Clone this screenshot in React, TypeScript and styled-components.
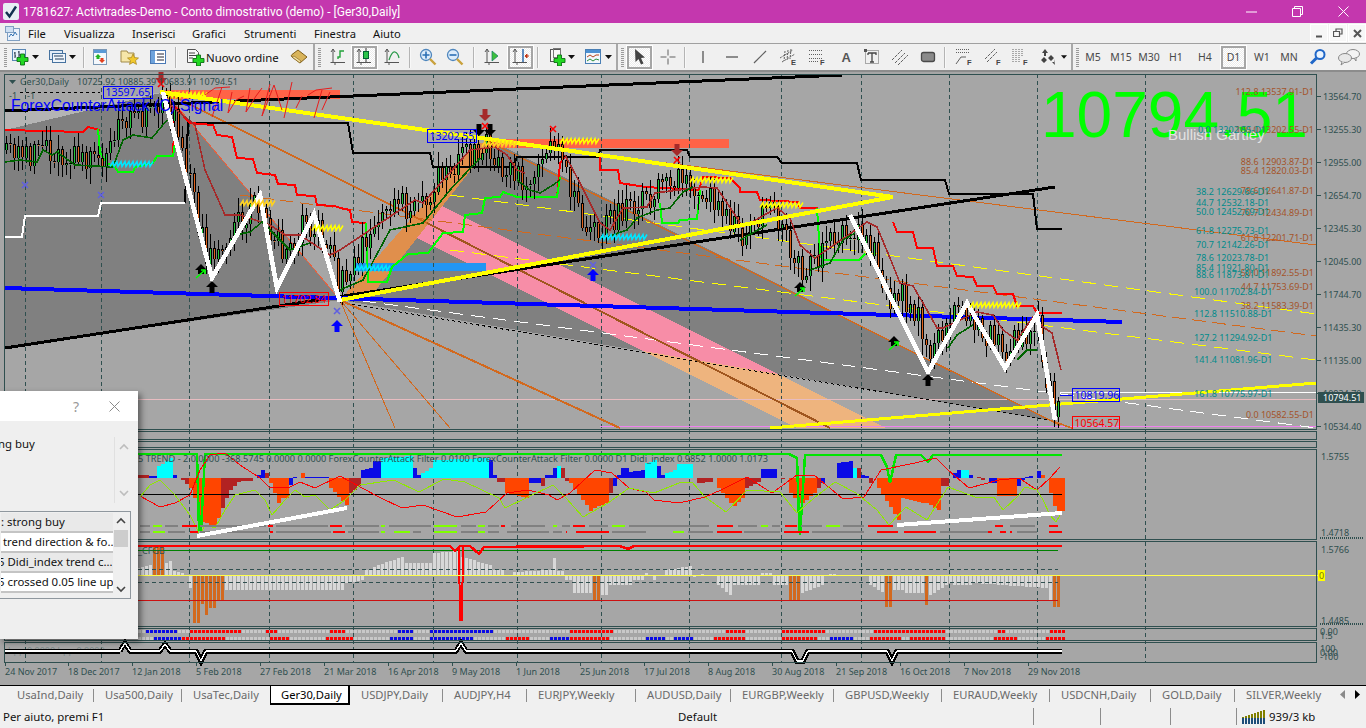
import React from "react";
import styled, { createGlobalStyle } from "styled-components";

const UI = `"Noto Sans", "Open Sans", "DejaVu Sans", sans-serif`;
const ARIAL = `"Liberation Sans", Arial, sans-serif`;
const SLATE = "#2f4f4f";

const Global = createGlobalStyle`
  html, body { margin: 0; padding: 0; height: 100%; overflow: hidden; background: #f0f0f0; }
  #root { height: 100%; }
`;

const Page = styled.div`
  width: 1366px; height: 728px; display: grid;
  grid-template-rows: 23px 20px 27px 615px 20px 23px;
  font-family: ${UI}; overflow: hidden;
`;
const TitleBar = styled.div`
  background: #c437ae; display: flex; align-items: center; color: #fff;
`;
const AppBadge = styled.div`
  width: 16px; height: 17px; margin: 0 4px 0 3px; background: #e8eef4; border-radius: 2px;
  display: flex; align-items: center; justify-content: center;
`;
const TitleText = styled.div`
  flex: 1; font-family: Roboto, ${UI}; font-size: 12px; white-space: nowrap; color: #fff;
`;
const WinBtn = styled.div`
  width: 46px; height: 23px; display: flex; align-items: center; justify-content: center;
`;
const MenuBar = styled.div`
  background: #f0f0f0; display: flex; align-items: center; font-size: 11.2px; color: #111;
`;
const MenuIcon = styled.div`
  width: 28px; padding-left: 5px; box-sizing: border-box; display: flex; align-items: center;
`;
const MenuItem = styled.div<{ $w: number }>`
  width: ${(p) => p.$w}px; white-space: nowrap;
`;
const MdiGroup = styled.div`
  margin-left: auto; display: flex; gap: 1px; padding-right: 0;
`;
const MdiBtn = styled.div`
  width: 18px; height: 18px; background: #f7f7f7; border: 1px solid #fff; box-sizing: border-box;
  display: flex; align-items: center; justify-content: center;
`;
const Toolbar = styled.div`
  background: #f0f0f0; border-top: 1px solid #a0a0a0; box-sizing: border-box;
  display: flex; align-items: center; padding-left: 2px; font-size: 11.2px; color: #111;
`;
const Grip = styled.div`
  width: 3px; height: 19px; margin: 0 1px 0 2px;
  background: repeating-linear-gradient(to bottom, #9a9a9a 0 1px, transparent 1px 2px);
`;
const Gap = styled.div<{ $w: number }>`
  width: ${(p) => p.$w}px; flex: none;
`;
const Sep = styled.div<{ $strong?: boolean }>`
  width: 2px; flex: none; height: ${(p) => (p.$strong ? 26 : 21)}px;
  background: ${(p) => (p.$strong ? "#a8a8a8" : "#b4b4b4")};
  ${(p) => (p.$strong ? "" : "border-right: 1px solid #f8f8f8; box-sizing: border-box;")}
`;
const Slot = styled.div<{ $w: number; $active?: boolean }>`
  width: ${(p) => p.$w}px; height: 23px; flex: none; box-sizing: border-box;
  display: flex; align-items: center; justify-content: center;
  ${(p) =>
    p.$active
      ? `border: 2px solid #a6a6a6; box-shadow: 0 0 0 1px #fff;
         background: repeating-conic-gradient(#ffffff 0 25%, #ececec 0 50%) 0 0 / 2px 2px;`
      : ""}
`;
const OrderLabel = styled.div`
  width: 77px; flex: none; font-size: 11.4px; white-space: nowrap; color: #111; box-sizing: border-box;
`;
const Period = styled(Slot)`
  font-size: 10.5px; color: #4a4a4a;
`;
const ChartArea = styled.div`
  position: relative; background: #a6a6a6; border-top: 2px solid #8c8c8c; box-sizing: border-box; overflow: hidden;
`;
const ChartSvg = styled.svg`
  position: absolute; left: 0; top: -2px; width: 1366px; height: 615px; display: block;
`;
const AxisText = styled.text<{ $c?: string; $s?: number }>`
  font-family: ${UI}; font-size: ${(p) => p.$s ?? 9}px; fill: ${(p) => p.$c ?? SLATE};
`;
const FibText = styled.text<{ $c: string }>`
  font-family: ${UI}; font-size: 9px; fill: ${(p) => p.$c};
`;
const BigPrice = styled.text`
  font-family: ${ARIAL}; font-size: 64px; fill: #00ff00;
`;
const PatternText = styled.text`
  font-family: ${ARIAL}; font-size: 15px; fill: #e2e2e2;
`;
const SignalText = styled.text`
  font-family: ${ARIAL}; font-size: 15.6px; fill: #0000ff;
`;
const BoxText = styled.text<{ $c: string }>`
  font-family: ${UI}; font-size: 10.5px; fill: ${(p) => p.$c};
`;

/* dialog */
const Dialog = styled.div`
  position: absolute; left: 0; top: 319px; width: 138px; height: 248px; background: #efefef;
  box-shadow: 3px 3px 6px rgba(0,0,0,.45); font-size: 11.4px; color: #111;
`;
const DialogHead = styled.div`
  height: 30px; background: #fff; display: flex; align-items: center; justify-content: flex-end; gap: 30px; padding-right: 18px;
`;
const HelpMark = styled.span`
  font-size: 14px; color: #999;
`;
const DialogBody = styled.div`
  height: 66px; margin-top: 16px; display: flex; justify-content: space-between;
`;
const BodyText = styled.div`
  line-height: 14px; margin-top: 0; margin-left: -2px; white-space: nowrap;
`;
const BodyScroll = styled.div`
  width: 19px; margin-right: 5px; border-left: 1px solid #e0e0e0; display: flex; flex-direction: column; justify-content: space-between; align-items: center; padding: 6px 0;
  box-sizing: border-box;
`;
const ListBox = styled.div`
  position: absolute; left: -1px; top: 120px; width: 132px; height: 88px; background: #efefef;
  border: 1px solid #8f979e; box-sizing: border-box; display: flex; padding: 1px 2px 1px 1px;
`;
const ListRows = styled.div`
  width: 112px; overflow: hidden;
`;
const ListRow = styled.div<{ $white?: boolean; $x: number }>`
  height: 20px; line-height: 18px; box-sizing: border-box; background: ${(p) => (p.$white ? "#fff" : "#e9e9e9")};
  border-bottom: 2px solid #c4c4c4; white-space: nowrap; overflow: hidden; padding-left: ${(p) => Math.max(0, p.$x)}px;
  text-indent: ${(p) => Math.min(0, p.$x)}px;
`;
const ListScroll = styled.div`
  flex: 1; display: flex; flex-direction: column; align-items: center; justify-content: space-between; padding: 4px 0;
  position: relative;
`;
const ScrollThumb = styled.div`
  position: absolute; left: 1px; right: 0; top: 17px; height: 17px; background: #cdcdcd;
`;

/* tabs + status */
const TabBar = styled.div`
  background: #f0f0f0; border-top: 1px solid #000; box-sizing: border-box; display: flex; padding-left: 6px; position: relative; font-size: 11.2px;
`;
const Tab = styled.div<{ $w: number; $active?: boolean; $last?: boolean }>`
  width: ${(p) => p.$w}px; box-sizing: border-box; padding-left: 11px; white-space: nowrap; line-height: 18px;
  color: ${(p) => (p.$active ? "#000" : "#6a6a6a")};
  ${(p) =>
    p.$active
      ? "background:#fff; border:1px solid #000; border-top:none; border-right-width:2px; border-bottom-width:2px; padding-left:10px; height:19px;"
      : p.$last
      ? ""
      : "position:relative;"}
  ${(p) =>
    !p.$active && !p.$last
      ? `&::after{content:""; position:absolute; right:0; top:3px; height:13px; width:1px; background:#8c8c8c;}`
      : ""}
`;
const TabArrows = styled.div`
  position: absolute; right: 6px; top: 4px; display: flex; gap: 10px; align-items: center;
  background: #f0f0f0; padding-left: 6px;
`;
const StatusBar = styled.div`
  background: #f0f0f0; display: flex; align-items: center; font-size: 11.4px; color: #111;
`;
const StatusCell = styled.div<{ $w: number; $line?: boolean }>`
  width: ${(p) => p.$w}px; height: 17px; line-height: 17px; box-sizing: border-box; flex: none; white-space: nowrap;
  display: flex; align-items: center; gap: 4px;
  ${(p) => (p.$line ? "border-left: 1px solid #8c8c8c; padding-left: 5px;" : "padding-left: 3px;")}
`;

/* ---------- toolbar icons ---------- */
const Svg = ({ w = 18, h = 18, children }: { w?: number; h?: number; children: React.ReactNode }) => (
  <svg width={w} height={h} viewBox={`0 0 ${w} ${h}`}>{children}</svg>
);
const Plus = ({ x, y, s = 1 }: { x: number; y: number; s?: number }) => (
  <path transform={`translate(${x} ${y}) scale(${s})`} d="M3.5 0h4v3.5H11v4H7.5V11h-4V7.5H0v-4h3.5z" fill="#22d822" stroke="#0b6e14" strokeWidth=".9" />
);
const DropArrow = () => (
  <Svg w={7} h={4}><path d="M0 0h7L3.5 4z" fill="#111" /></Svg>
);
const NewChart = () => (
  <Svg>
    <rect x="1.5" y="1.5" width="13" height="11" fill="#eaf2fb" stroke="#5a87b5" />
    <path d="M4 4v6M3 5h1M4 8h1M8 3v6M7 4h1M8 7h1" stroke="#234" fill="none" />
    <Plus x={6} y={6} />
  </Svg>
);
const Profiles = () => (
  <Svg>
    <rect x="1.5" y="2.5" width="13" height="9" fill="#dfeaf6" stroke="#46729f" />
    <rect x="4.5" y="5.5" width="13" height="9" fill="#eef4fb" stroke="#46729f" />
    <path d="M6 8h9M7 11h9" stroke="#1f3a5a" />
  </Svg>
);
const MarketWatch = () => (
  <Svg w={16}>
    <rect x="1.5" y="1.5" width="13" height="15" fill="#f4f8fc" stroke="#7a97b5" />
    <path d="M2 2h12v3H2z" fill="#5a9ad6" />
    <path d="M6 6l3 3H7.5v2h-3V9H3z" fill="#22b322" />
    <path d="M10 15l-3-3h1.5v-2h3v2H13z" fill="#e2401e" />
  </Svg>
);
const FolderStar = () => (
  <Svg w={20}>
    <path d="M1 3h6l1 2h6v9H1z" fill="#f6e6a8" stroke="#a08a4a" />
    <path d="M13 6l1.6 3.6 3.9.4-3 2.6 1 3.8-3.5-2-3.5 2 1-3.8-3-2.6 3.9-.4z" fill="#f2c92e" stroke="#a2801c" strokeWidth=".7" />
  </Svg>
);
const Navigator = () => (
  <Svg>
    <rect x="1.5" y="2.5" width="15" height="13" fill="#fff" stroke="#4a79b5" />
    <path d="M2 3h4v12H2z" fill="#6ea3dc" />
    <path d="M8 6h7M8 9h7M8 12h7" stroke="#223" />
  </Svg>
);
const NewOrder = () => (
  <Svg w={20}>
    <path d="M2.5 1.5h8l3 3v10h-11z" fill="#f9f9f9" stroke="#555" />
    <path d="M4 5h6M4 7.5h7M4 10h4" stroke="#444" />
    <Plus x={8} y={7} />
  </Svg>
);
const Expert = () => (
  <Svg>
    <path d="M8 2l9 7-7 6-8-6q-1.5-1.2 0-2.5z" fill="#d9b45a" stroke="#7f5e1a" />
    <path d="M2 9l8 6 1-2-7-5z" fill="#f3e0a2" stroke="#7f5e1a" strokeWidth=".6" />
  </Svg>
);
const axes = "M3 1v14M0.5 14.5H15M5 15v2M1 4l2-3 2 3";
const ChartBar = () => (
  <Svg>
    <path d={axes} fill="none" stroke="#555" />
    <path d="M8 11v-2h2V3h2M12 3h2" fill="none" stroke="#22a33a" strokeWidth="1.4" />
  </Svg>
);
const ChartCandle = () => (
  <Svg>
    <path d={axes} fill="none" stroke="#555" />
    <path d="M10 0v14" stroke="#333" />
    <rect x="7.5" y="3.5" width="5" height="7" fill="#2bc44a" stroke="#063" />
  </Svg>
);
const ChartLine = () => (
  <Svg>
    <path d={axes} fill="none" stroke="#555" />
    <path d="M5 12q3-9 6-8t4 6" fill="none" stroke="#2a9a4a" strokeWidth="1.3" />
  </Svg>
);
const ZoomIcon = ({ minus }: { minus?: boolean }) => (
  <Svg>
    <circle cx="7" cy="7" r="5.5" fill="#dcecfb" stroke="#4f86bd" strokeWidth="1.3" />
    <path d="M11 11l5.5 5.5" stroke="#c9a13c" strokeWidth="2.4" />
    <path d={minus ? "M3.5 7h7" : "M3.5 7h7M7 3.5v7"} stroke="#2a6fb5" strokeWidth="1.6" />
  </Svg>
);
const AutoScroll = () => (
  <Svg>
    <path d={axes} fill="none" stroke="#555" />
    <path d="M8 3l6 5-6 5z" fill="#3cc03c" stroke="#176" strokeWidth=".7" />
  </Svg>
);
const ChartShift = () => (
  <Svg>
    <path d={axes} fill="none" stroke="#555" />
    <path d="M11 1v13" stroke="#1f5fa8" strokeWidth="1.4" />
    <path d="M13 8h4M13 8l2-2v4z" fill="#c23a1a" stroke="#c23a1a" />
  </Svg>
);
const Indicators = () => (
  <Svg>
    <rect x="2.5" y="1.5" width="10" height="12" fill="#f7f7f7" stroke="#555" />
    <rect x="5.5" y="0.5" width="7" height="9" fill="none" stroke="#777" />
    <Plus x={6} y={7} />
  </Svg>
);
const Templates = () => (
  <Svg>
    <rect x="1.5" y="1.5" width="15" height="14" fill="#f2f7fc" stroke="#4a7fb5" />
    <path d="M2 2h14v3H2z" fill="#4d90d2" />
    <path d="M3 9l3-2 3 2 3-2 3 0" stroke="#b5421e" fill="none" />
    <path d="M3 13l3-2 3 2 3-2 3 1" stroke="#2a8f3a" fill="none" />
  </Svg>
);
const Cursor = () => (
  <Svg w={14}>
    <path d="M2 1l10 8.5-4 .5 2.5 5.5-2.5 1-2.5-5.5-3 3z" fill="#444" />
  </Svg>
);
const g = "#606060";
const Cross = () => (<Svg><path d="M9 1.5v6M9 10.5v6M1.5 9h6M10.5 9h6" stroke={g} /></Svg>);
const VLine = () => (<Svg><path d="M9 3v12" stroke={g} strokeWidth="1.4" /></Svg>);
const HLine = () => (<Svg><path d="M3 9h12" stroke={g} strokeWidth="1.4" /></Svg>);
const TLine = () => (<Svg><path d="M3 15L15 3" stroke={g} strokeWidth="1.2" /></Svg>);
const Badge = ({ t, x = 12 }: { t: string; x?: number }) => (
  <text x={x} y="17" fontFamily={ARIAL} fontSize="7.5" fontWeight="bold" fill="#444">{t}</text>
);
const ChanE = () => (
  <Svg><path d="M1 10L14 2M3 14L16 6M6 3l-1 10M9 2l-1 10M12 1l-1 10" stroke={g} fill="none" strokeDasharray="2 1" /><Badge t="E" /></Svg>
);
const FiboH = () => (
  <Svg>
    <path d="M1 2.5h14M1 6.5h14M1 10.5h14M1 13.5h9" stroke={g} strokeDasharray="1 1" />
    <Badge t="F" />
  </Svg>
);
const LetterA = () => (<Svg w={12}><text x="0.5" y="14" fontFamily={ARIAL} fontSize="13" fontWeight="bold" fill="#555">A</text></Svg>);
const TextBox = () => (
  <Svg>
    <rect x="2.5" y="2.5" width="13" height="13" fill="none" stroke={g} strokeDasharray="1 1" />
    <rect x="1" y="1" width="3" height="3" fill="#555" />
    <path d="M5 5h8v2M9 5v9M7 14h4M5 5v2" stroke="#444" fill="none" strokeWidth="1.3" />
  </Svg>
);
const Equi = () => (<Svg><path d="M1 12L11 2M4 15L14 5M7 17L17 7" stroke={g} strokeDasharray="3 1" /></Svg>);
const RectIcon = () => (<Svg w={16}><rect x="1.5" y="4.5" width="13" height="9" rx="2" fill="#8a8a8a" stroke="#4a4a4a" strokeWidth="1.3" /></Svg>);
const FiboFan = () => (
  <Svg>
    <path d="M1 1.5h14M1 4.5h14" stroke={g} strokeDasharray="1 1" />
    <path d="M1 16L6 9h5" stroke={g} fill="none" />
    <Badge t="F" />
  </Svg>
);
const ChanF = () => (<Svg><path d="M1 11L11 1M3 14L13 4" stroke={g} strokeDasharray="3 1" /><Badge t="F" /></Svg>);
const GridF = () => (<Svg><path d="M2 1v14M5 1v14M8 1v14M11 1v8" stroke={g} strokeDasharray="1 1" /><Badge t="F" /></Svg>);
const ArrowsIcon = () => (
  <Svg>
    <path d="M5 1l3 4H6v3H4V5H2z" fill="#444" />
    <path d="M4 9l3 3-3 3-3-3zM11 7l3 3-3 3-3-3z" fill="#444" />
    <path d="M15 17l-3-3h2v-3" fill="#444" />
  </Svg>
);
const Search = () => (
  <Svg>
    <circle cx="11" cy="6.5" r="4.5" fill="#eaf4ff" stroke="#2067c8" strokeWidth="2" />
    <path d="M7.5 10L2 15.5" stroke="#2067c8" strokeWidth="3" />
  </Svg>
);
const Chat = () => (
  <Svg w={22} h={18}>
    <ellipse cx="15" cy="6" rx="6.5" ry="4.5" fill="#f4f4f4" stroke="#888" />
    <ellipse cx="7" cy="10" rx="6.5" ry="4.5" fill="#e8e8e8" stroke="#888" />
    <path d="M4 14l-1 3 4-3M16 10l2 3 0-4" fill="#eee" stroke="#888" />
  </Svg>
);

/* ---------- chart data ---------- */
type P = [number, number];
const interp = (pts: P[], x: number) => {
  if (x <= pts[0][0]) return pts[0][1];
  for (let i = 1; i < pts.length; i++) {
    if (x <= pts[i][0]) {
      const [a, b] = pts[i - 1];
      const [c, d] = pts[i];
      return b + ((d - b) * (x - a)) / (c - a);
    }
  }
  return pts[pts.length - 1][1];
};
let seed = 11;
const rnd = () => {
  seed = (seed * 16807) % 2147483647;
  return seed / 2147483647;
};
const pricePath: P[] = [
  [5,150],[30,155],[50,150],[75,157],[100,168],[110,135],[130,122],[155,112],[165,98],[180,130],[195,205],[205,255],
  [215,250],[240,218],[255,205],[270,228],[285,255],[300,228],[320,228],[340,285],[360,250],[380,225],[400,205],[420,210],
  [440,175],[460,160],[485,142],[500,168],[520,178],[540,170],[555,140],[570,190],[590,235],[610,220],[625,210],[650,195],
  [680,175],[700,190],[720,210],[745,240],[762,213],[773,213],[785,237],[790,253],[793,267],[802,268],[813,262],[825,253],
  [833,233],[847,227],[857,233],[873,247],[877,262],[886,297],[902,295],[910,310],[917,313],[925,347],[930,353],[942,337],
  [953,313],[967,317],[977,330],[997,340],[1002,357],[1017,338],[1030,337],[1037,320],[1045,372],[1056,420],[1060,395],
];
const Candles: React.FC = () => {
  const out: React.ReactNode[] = [];
  let prev = 150;
  let dir = 1;
  for (let i = 0; i < 264; i++) {
    const x = 6 + 4 * i;
    dir = rnd() < 0.65 ? -dir : dir;
    const c = interp(pricePath, x) + dir * (3 + rnd() * 10);
    const o = prev;
    const top = Math.min(o, c);
    const bot = Math.max(o, c);
    const up = c < o;
    const h = top - 3 - rnd() * 12;
    const l = bot + 3 + rnd() * 13;
    out.push(
      <g key={i}>
        <path d={`M${x + 0.5} ${h.toFixed(0)}V${l.toFixed(0)}`} stroke="#000" />
        <rect x={x - 1} y={top.toFixed(0)} width={3} height={Math.max(1, bot - top).toFixed(0)} fill="#000" />
        <rect x={x} y={(top + 1).toFixed(0)} width={1.4} height={Math.max(1, bot - top - 1).toFixed(0)} fill={up ? "#21c63a" : "#e0621c"} />
      </g>
    );
    prev = c;
  }
  return <g>{out}</g>;
};
const gridXs = [25,101,189,269,353,433,517,601,689,781,861,949,1037,1145];
const dates: [string, number][] = [
  ["24 Nov 2017",5],["18 Dec 2017",68],["12 Jan 2018",132],["5 Feb 2018",196],["27 Feb 2018",260],["21 Mar 2018",324],
  ["16 Apr 2018",388],["9 May 2018",452],["1 Jun 2018",516],["25 Jun 2018",580],["17 Jul 2018",644],["8 Aug 2018",708],
  ["30 Aug 2018",772],["21 Sep 2018",836],["16 Oct 2018",900],["7 Nov 2018",964],["29 Nov 2018",1028],
];
const axisPrices: [string, number][] = [
  ["13564.70",96],["13255.30",129.3],["12955.00",162.3],["12654.70",195.3],["12345.30",228.7],["12045.00",261.7],
  ["11744.70",294.7],["11435.30",327.7],["11135.00",360.7],["10834.70",393.7],["10534.40",426.7],
];
const BR = "#a4542a";
const TE = "#008b8b";
const fibR: [string, number][] = [
  ["112.8 13537.91-D1",92],["100.0 13202.55-D1",129.6],["88.6 12903.87-D1",162],["85.4 12820.03-D1",171],
  ["78.6 12641.87-D1",190.7],["70.7 12434.89-D1",213],["61.8 12201.71-D1",238],["50.0 11892.55-D1",272.7],
  ["44.7 11753.69-D1",287],["38.2 11583.39-D1",305.7],["0.0 10582.55-D1",414.7],
];
const fibL: [string, number, number][] = [
  ["0.0 13202.55-D1",129.6,1198],["38.2 12629.66-D1",191.7,1196],["44.7 12532.18-D1",202.7,1196],["50.0 12452.69-D1",211.7,1196],
  ["61.8 12275.73-D1",230.7,1196],["70.7 12142.26-D1",244.7,1196],["78.6 12023.78-D1",257.7,1196],["85.4 11921.80-D1",268,1196],
  ["88.6 11873.81-D1",274.7,1196],["100.0 11702.84-D1",292,1194],["112.8 11510.88-D1",313.7,1194],["127.2 11294.92-D1",337.7,1194],
  ["141.4 11081.96-D1",360,1194],["161.8 10775.97-D1",393.7,1194],
];
const pts = (a: P[]) => a.map((p) => p.join(",")).join(" ");
const PL = ({ p, c, w = 1, d }: { p: P[]; c: string; w?: number; d?: string }) => (
  <polyline points={pts(p)} fill="none" stroke={c} strokeWidth={w} strokeDasharray={d} />
);
const Zig = ({ x0, x1, y, c }: { x0: number; x1: number; y: number; c: string }) => {
  const a: P[] = [];
  for (let x = x0; x <= x1; x += 4) a.push([x, y + 2.5], [x + 3, y - 2.5]);
  return <PL p={a} c={c} w={1.5} />;
};
const UpArrow = ({ x, y, c = "#0000ff", s = 1 }: { x: number; y: number; c?: string; s?: number }) => (
  <path transform={`translate(${x} ${y}) scale(${s})`} d="M0 -6L6 0H2.5V6H-2.5V0H-6Z" fill={c} />
);
const DownArrow = ({ x, y, c = "#a52a2a" }: { x: number; y: number; c?: string }) => (
  <path transform={`translate(${x} ${y})`} d="M0 6L6 0H2.5V-6H-2.5V0H-6Z" fill={c} />
);
const XMark = ({ x, y, c }: { x: number; y: number; c: string }) => (
  <path d={`M${x - 3} ${y - 3}L${x + 3} ${y + 3}M${x + 3} ${y - 3}L${x - 3} ${y + 3}`} stroke={c} strokeWidth="1.6" />
);
const BuyMark = ({ x, y }: { x: number; y: number }) => (
  <g>
    <path transform={`translate(${x} ${y})`} d="M0 -6L6 0H3V4H-3V0H-6Z" fill="#000" />
    <path d={`M${x - 5} ${y + 8}L${x + 4} ${y}M${x} ${y}H${x + 4}V${y + 4}`} stroke="#00ff00" strokeWidth="1.6" fill="none" />
  </g>
);
const PriceBox = ({ x, y, w, h, t, c }: { x: number; y: number; w: number; h: number; t: string; c: string }) => (
  <g>
    <rect x={x + 0.5} y={y + 0.5} width={w} height={h} fill="none" stroke={c} shapeRendering="crispEdges" />
    <BoxText x={x + 2.5} y={y + h - 2.5} $c={c}>{t}</BoxText>
  </g>
);

const B = "#0a0ae6", C = "#00ffff", O = "#ff4500", R = "#b22222", G = "#d8d8d8", D = "#d2691e";
type Seg = [number, number, number, number, string];
const hist1: Seg[] = [
  [138,146,3,3,R],[148,152,2,2,B],[154,168,9,20,C],[170,170,8,8,B],[174,174,3,3,B],[180,186,-2,-6,R],[190,194,-10,-20,O],
  [196,214,-42,-48,O],[218,218,-40,-40,O],[222,226,-30,-20,R],[230,238,-12,-4,R],[242,250,-3,-3,R],[256,256,3,3,B],[260,262,8,8,B],
  [266,266,5,5,R],[270,276,-5,-25,O],[278,282,-30,-20,O],[286,286,-20,-20,O],[290,290,-7,-7,B],[294,294,1,1,B],[300,302,5,5,O],
  [306,314,1,1,B],[318,326,1,1,B],[330,346,-10,-27,O],[350,358,-15,-8,R],[362,370,8,10,B],[374,378,17,17,B],[382,410,20,22,C],
  [412,412,10,10,B],[416,418,3,3,B],[422,430,5,10,C],[434,486,18,20,C],[488,488,18,18,B],[492,492,3,3,B],[497,503,-4,-4,R],
  [505,526,-15,-20,O],[528,536,-5,-5,B],[541,541,-8,-8,R],[545,549,3,3,B],[553,553,10,10,B],[557,557,12,12,C],[561,561,10,10,R],
  [565,565,-3,-3,R],[569,590,-5,-33,O],[594,604,-30,-25,O],[608,608,-15,-15,R],[612,612,-8,-8,B],[616,616,3,3,B],[620,624,10,10,B],
  [630,642,6,8,B],[646,654,15,18,C],[658,658,12,12,B],[662,662,3,3,B],[666,673,5,8,C],[676,688,14,14,C],[690,690,8,8,B],[696,709,-5,-4,R],
  [717,728,-10,-25,O],[732,742,-28,-20,O],[747,757,-10,-4,R],[761,774,9,9,B],[780,780,-1,-1,R],[789,799,-15,-25,O],[803,814,-25,-15,O],
  [818,818,-10,-10,R],[822,822,-5,-5,B],[836,850,15,17,B],[852,852,10,10,C],[856,856,10,10,R],[862,866,3,2,B],[870,870,-5,-5,R],
  [879,898,-10,-42,O],[902,923,-20,-25,O],[926,938,-25,-32,O],[942,946,-8,-8,R],[952,958,5,8,B],[962,966,8,8,C],[970,970,3,3,B],
  [976,976,1,1,R],[982,982,-2,-2,R],[990,994,-5,-5,B],[999,1014,-18,-18,O],[1018,1018,-8,-8,B],[1022,1022,-2,-2,B],[1026,1026,1,1,B],
  [1030,1030,2,2,B],[1038,1038,7,7,B],[1042,1042,3,3,O],[1050,1050,-15,-15,O],[1054,1054,-28,-28,O],[1058,1062,-33,-33,O],
];
const hist2: Seg[] = [
  [138,150,7,10,G],[154,162,29,29,D],[166,170,12,14,G],[174,182,4,2,G],[190,190,-13,-13,G],[194,198,-48,-48,D],[202,202,-29,-29,D],
  [206,206,-40,-40,D],[210,214,-33,-33,D],[218,222,-26,-26,D],[226,340,-15,-15,G],[344,362,-8,-5,G],[366,374,5,8,G],[378,402,10,18,G],
  [406,430,12,12,G],[434,458,22,24,G],[462,490,18,10,G],[494,503,5,5,G],[515,549,3,5,G],[553,553,17,17,G],[557,561,4,4,G],
  [565,570,-5,-5,G],[574,589,-18,-18,G],[593,597,-26,-26,D],[601,606,-20,-20,G],[610,630,-10,-10,G],[634,640,-5,-5,G],[646,646,2,2,G],
  [654,654,-5,-5,G],[667,688,5,9,G],[692,692,-2,-2,G],[700,700,1,1,G],[717,730,-10,-20,G],[734,757,-10,-10,G],[761,770,2,2,G],
  [774,785,-10,-10,G],[789,797,-26,-26,D],[801,822,-18,-10,G],[830,860,1,-1,G],[868,881,-10,-17,G],[885,891,-32,-32,D],[895,902,-15,-15,G],
  [906,920,-18,-18,G],[924,924,-30,-30,D],[928,948,-20,-8,G],[952,970,-10,-10,G],[974,1046,-8,-13,G],[1050,1050,-25,-25,G],[1054,1058,-32,-32,D],
];
const barsFrom = (segs: Seg[]) => {
  const out: { x: number; v: number; c: string }[] = [];
  const used = new Set<number>();
  segs.forEach(([a, b, v0, v1, c]) => {
    const i0 = Math.round((a - 6) / 4);
    const i1 = Math.max(i0, Math.round((b - 6) / 4));
    for (let i = i0; i <= i1; i++) {
      if (used.has(i)) continue;
      used.add(i);
      const t = i1 === i0 ? 0 : (i - i0) / (i1 - i0);
      out.push({ x: 6 + 4 * i, v: v0 + (v1 - v0) * t, c });
    }
  });
  return out;
};
const Hist = ({ segs, base, w = 3 }: { segs: Seg[]; base: number; w?: number }) => (
  <g>
    {barsFrom(segs).map((b) => (
      <rect key={b.x} x={b.x - 1} y={b.v > 0 ? base - b.v : base} width={w} height={Math.abs(b.v)} fill={b.c} />
    ))}
  </g>
);
const redThin: P[] = [
  [140,496],[160,507],[175,503],[190,495],[200,470],[210,455],[225,453],[240,465],[260,478],[270,488],[290,487],[300,482],[315,488],[340,476],[360,487],
  [381,498],[402,508],[423,505],[457,517],[486,512],[507,493],[528,490],[549,495],[557,500],[570,493],[595,470],[612,473],[629,488],[646,492],[654,500],
  [679,503],[705,497],[721,490],[747,477],[772,493],[797,475],[814,475],[843,499],[864,497],[881,470],[915,463],[936,458],[948,470],[969,488],[999,480],
  [1019,478],[1037,490],[1050,478],[1060,467],
];
const limeThin: P[] = [
  [140,497],[150,485],[160,480],[175,495],[190,515],[200,535],[205,525],[215,528],[225,510],[235,495],[255,490],[265,500],[272,515],[285,500],[295,490],
  [305,497],[315,495],[330,510],[345,500],[360,485],[394,480],[419,492],[444,479],[465,482],[499,498],[505,508],[528,497],[553,485],[566,498],[583,517],
  [608,503],[629,488],[654,493],[679,483],[692,482],[705,497],[726,512],[747,490],[780,492],[797,513],[814,498],[835,482],[856,493],[877,510],[889,525],
  [906,507],[927,520],[948,487],[978,498],[994,497],[1003,510],[1019,495],[1025,487],[1037,490],[1043,500],[1050,515],[1056,522],[1060,515],
];
const limeThick: P[] = [
  [138,454],[197,454],[199,530],[201,530],[205,454],[789,454],[797,458],[799,520],[800,535],[805,455],[881,455],[887,467],[890,483],[896,455],[921,455],[928,462],[933,455],[1062,455],
];
const px = (p: number) => 360 + p / 2.38;
type Dash = [number, number, string];
const GR = "#808080", LI = "#7fff00", RE = "#ff0000";
const row526: Dash[] = [
  [140,150,GR],[153,162,LI],[165,178,GR],[182,197,RE],[200,266,GR],[268,273,RE],[276,328,GR],[330,342,RE],[345,379,GR],
  [px(50),px(60),LI],[px(70),px(170),GR],[px(175),px(230),LI],[px(240),px(275),GR],[px(280),px(298),LI],[px(305),px(330),GR],[px(335),px(345),RE],
  [px(360),px(440),GR],[px(460),px(470),LI],[px(480),px(500),GR],[px(508),px(535),RE],[px(545),px(590),GR],[px(600),px(630),LI],[px(640),px(830),GR],
  [px(850),px(888),RE],[px(900),px(945),GR],[px(955),px(972),LI],[px(980),px(1000),GR],[px(1012),px(1040),RE],[px(1050),px(1100),GR],[px(1110),px(1143),LI],
  [px(1150),px(1200),GR],[px(1210),px(1268),RE],[995,1003,RE],[1010,1035,GR],[1049,1058,RE],
];
const row532: Dash[] = [
  [140,150,GR],[153,165,LI],[168,185,GR],[190,198,RE],[200,268,GR],[270,273,RE],[276,331,GR],[333,345,RE],[348,379,GR],
  [px(50),px(60),LI],[px(80),px(118),LI],[px(125),px(145),GR],[px(175),px(230),LI],[px(240),px(280),GR],[px(282),px(298),LI],[px(305),px(330),GR],
  [px(350),px(450),GR],[px(460),px(480),GR],[px(490),px(492),RE],[px(515),px(592),RE],[px(600),px(680),GR],[px(745),px(772),LI],[px(780),px(840),GR],
  [px(850),px(908),RE],[px(915),px(1000),GR],[px(1010),px(1068),RE],[px(1075),px(1200),GR],[px(1230),px(1280),RE],[px(1295),px(1370),RE],
  [px(1380),px(1500),GR],[988,992,RE],[1000,1006,RE],[1010,1012,RE],[1017,1037,GR],[1049,1062,RE],
];
const sq1: Dash[] = [
  [148,167,B],[172,175,B],[192,238,RE],[268,275,RE],[332,335,RE],[340,343,RE],[400,404,B],[408,410,B],[431,490,B],[572,610,RE],[728,742,RE],
  [784,822,RE],[875,942,RE],[999,1003,RE],[1052,1062,RE],
];
const sq2: Dash[] = [
  [156,180,B],[183,223,RE],[270,287,RE],[328,350,RE],[391,410,B],[431,471,B],[505,526,RE],[551,566,B],[572,606,RE],[648,662,B],[673,690,B],[715,742,RE],
  [784,814,RE],[830,850,B],[870,898,RE],[910,942,RE],[994,1015,RE],[1048,1062,RE],
];
const Squares = ({ segs, y }: { segs: Dash[]; y: number }) => {
  const cells: React.ReactNode[] = [];
  for (let x = 138; x <= 1062; x += 4) {
    const hit = segs.find(([a, b]) => x + 2 >= a && x <= b);
    cells.push(<rect key={x} x={x} y={y} width={3} height={3} fill={hit ? hit[2] : "#c8c8c8"} />);
  }
  return <g>{cells}</g>;
};
const boxes: [number, number][] = [[74.5,429.5],[431.5,439.5],[441.5,447.5],[449.5,539.5],[541.5,626.5],[628.5,640.5],[642.5,662.5]];
const signal: P[] = [
  [120,651],[125,643],[130,651],[160,651],[165,644],[170,651],[196,651],[201,661],[206,651],[456,651],[461,643],[466,651],
  [792,651],[797,661],[803,661],[808,651],[887,651],[892,661],[897,651],[1062,651],
];

const Chart: React.FC = () => (
  <ChartSvg viewBox="0 70 1366 615">
    <clipPath id="mainPanel"><rect x="5" y="75" width="1311" height="354" /></clipPath>
    <g shapeRendering="crispEdges" clipPath="url(#mainPanel)">
      {/* base shading */}
      <polygon points="5,112 165,92 5,130" fill="#b4b4b4" />
      <polygon points="5,130 165,92 340,300 5,348" fill="#808080" />
      <polygon points="340,300 490,140 1050,420" fill="#808080" />
      <polygon points="440,205 778,374 643,351 407,233" fill="#f78da7" />
      <polygon points="643,351 778,374 886,428 797,428" fill="#eeb47e" />
      <polygon points="340,300 478,142 490,146 368,300" fill="#e08f4c" />
      <rect x="165" y="90" width="175" height="9" fill="#ff6347" />
      <rect x="485" y="139" width="244" height="9" fill="#ff6347" />
      <rect x="355" y="263" width="131" height="8" fill="#2196f3" />
      {/* grid */}
      {gridXs.map((x) => (
        <path key={x} d={`M${x + 0.5} 74V429`} stroke={SLATE} strokeDasharray="4 3" />
      ))}
      <path d="M20 92.5H100" stroke="#000" strokeDasharray="3 3" />
      {/* horizontal levels */}
      <path d="M138 399.5H1316" stroke="#e7bcc0" />
      <path d="M1060 392.5H1316" stroke="#ffffff" />
      <path d="M600 426.5H1316" stroke="#ee82ee" strokeWidth="1.4" />
      {/* trend lines */}
      <PL p={[[240,195],[1316,336]]} c="#d2691e" w={1} d="14 6" />
      <PL p={[[485,140],[1316,245]]} c="#d2691e" w={1} />
      <PL p={[[450,195],[1316,314]]} c="#ffff00" w={1} d="14 8" />
      <PL p={[[450,250],[1316,360]]} c="#ffff00" w={1} d="14 8" />
      <PL p={[[340,298],[1316,428]]} c="#ffffff" w={1} d="14 8" />
      <PL p={[[340,302],[1050,420]]} c="#000000" w={1} d="3 3" />
      <PL p={[[165,92],[427,223]]} c="#d2691e" w={2} />
      <PL p={[[427,223],[830,428]]} c="#a0561e" w={2} />
      <PL p={[[165,92],[340,300]]} c="#e8603c" w={1} />
      <PL p={[[340,300],[620,428]]} c="#d2691e" w={2} />
      <PL p={[[340,300],[450,428]]} c="#d2691e" w={1} />
      <PL p={[[340,300],[395,428]]} c="#d2691e" w={1} />
      <PL p={[[485,140],[1060,425]]} c="#d2691e" w={1.4} />
      {/* black step */}
      <PL p={[[185,203],[188,123],[348,123],[353,153],[430,153],[433,167],[513,167],[517,157],[598,157],[600,150],[687,150],[690,157],[777,157],[782,163],[857,163],[861,180],[945,180],[949,194],[1033,194],[1037,229],[1062,229]]} c="#000" w={2} />
      {/* white step */}
      <PL p={[[5,237],[22,237],[25,216],[98,216],[101,203],[185,203]]} c="#fff" w={2} />
      {/* red step */}
      <PL p={[[5,130],[83,132],[88,127],[100,130]]} c="#ff0000" w={2} />
      <PL p={[[173,155],[175,107],[190,123],[213,125],[217,135],[232,137],[237,158],[253,159],[257,173],[275,175],[278,184],[295,185],[297,195],[315,196],[317,205],[335,206],[340,208],[350,210],[352,222],[366,223]]} c="#ff0000" w={2} />
      <PL p={[[557,198],[560,163],[565,157]]} c="#ff0000" w={2} />
      <PL p={[[600,157],[600,170],[618,170],[620,183],[645,187],[698,190],[700,187],[703,177],[730,178],[740,188],[740,192],[757,192],[760,200],[798,202],[800,208],[818,208]]} c="#ff0000" w={2} />
      <PL p={[[835,207],[840,208]]} c="#ff0000" w={2} />
      <PL p={[[893,222],[897,232],[913,232],[917,248],[933,248],[937,266],[953,266],[957,276],[973,277],[977,286],[993,286],[997,294],[1013,294],[1017,306],[1033,306],[1037,313],[1062,313]]} c="#ff0000" w={2} />
      {/* lime step */}
      <PL p={[[98,129],[100,153],[107,163],[115,167],[118,172],[133,172],[135,167],[153,163],[157,156],[173,156],[175,143]]} c="#00ff00" w={2} />
      <PL p={[[366,223],[368,282],[387,282],[392,267],[408,254],[428,253],[443,233],[463,232],[465,215],[482,213],[485,198],[500,197],[503,192],[517,197],[557,197],[560,177]]} c="#00ff00" w={2} />
      <PL p={[[660,203],[662,223],[678,223],[680,220],[697,219],[700,190]]} c="#00ff00" w={2} />
      <PL p={[[817,208],[820,253],[822,260],[859,260],[865,254]]} c="#00ff00" w={2} />
      {/* thick structural lines */}
      <PL p={[[5,111],[842,75]]} c="#000" w={3} />
      <PL p={[[5,348],[1055,187]]} c="#000" w={3} />
      <PL p={[[5,288],[1122,322]]} c="#0000ff" w={4} />
      <PL p={[[770,428],[1316,383]]} c="#ffff00" w={3} />
    </g>
    <g shapeRendering="crispEdges" clipPath="url(#mainPanel)">
      <Candles />
      {/* moving averages */}
      <PL p={[[170,105],[195,125],[205,170],[225,215],[240,215],[270,225],[285,235],[300,235],[330,255],[340,250],[415,200],[423,203],[470,150],[495,147],[507,155],[517,170],[525,173]]} c="#a52a2a" w={1.6} />
      <PL p={[[565,155],[580,183],[600,223],[610,230],[623,208],[647,207],[655,193],[702,187],[717,188],[727,203],[743,227],[777,208],[790,218],[800,245],[815,258],[867,222],[877,227],[890,258],[900,283],[913,286],[927,310],[937,328],[943,328],[977,312],[993,315],[1003,330],[1017,340],[1033,317],[1043,327],[1052,333],[1061,370]]} c="#a52a2a" w={1.6} />
      <PL p={[[5,162],[20,160],[37,162],[43,150],[52,155],[57,152],[75,165],[113,167],[123,140],[133,135],[152,138],[167,120]]} c="#006400" w={1.6} />
      <PL p={[[235,235],[250,232],[262,222],[290,250],[310,243]]} c="#006400" w={1.6} />
      <PL p={[[340,290],[363,280],[390,230],[423,223],[450,190],[480,158]]} c="#006400" w={1.6} />
      <PL p={[[517,180],[530,190],[540,193],[553,185],[560,180]]} c="#006400" w={1.6} />
      <PL p={[[607,237],[627,230],[637,218],[657,210],[670,208],[683,192],[693,187]]} c="#006400" w={1.6} />
      <PL p={[[740,240],[767,225]]} c="#006400" w={1.6} />
      <PL p={[[810,270],[830,263],[843,240],[855,233]]} c="#006400" w={1.6} />
      <PL p={[[948,348],[957,335],[973,325]]} c="#006400" w={1.6} />
      <PL p={[[1017,360],[1027,350],[1037,350]]} c="#006400" w={1.6} />
      {/* fat lines above candles */}
      <PL p={[[160,92],[893,197],[340,300]]} c="#ffff00" w={4} />
      <PL p={[[163,92],[212,278],[260,195],[277,288],[314,214],[340,302]]} c="#ffffff" w={4.5} />
      <PL p={[[850,215],[928,372],[967,303],[1005,368],[1037,315],[1055,420]]} c="#ffffff" w={4.5} />
      <PL p={[[1060,395],[1072,395]]} c="#0000ff" w={1} />
      <PL p={[[1055,422],[1072,428]]} c="#d2691e" w={1.5} />
    </g>
    {/* hatch marks */}
    <Zig x0={168} x1={205} y={95} c="#ffff00" />
    <Zig x0={482} x1={515} y={144} c="#ffd21f" />
    <Zig x0={560} x1={596} y={141} c="#ffff00" />
    <Zig x0={690} x1={730} y={180} c="#ffff00" />
    <Zig x0={760} x1={802} y={205} c="#ffff00" />
    <Zig x0={240} x1={275} y={203} c="#ffd21f" />
    <Zig x0={312} x1={340} y={228} c="#ffff00" />
    <Zig x0={970} x1={1018} y={305} c="#ffff00" />
    <Zig x0={110} x1={150} y={164} c="#00e5ff" />
    <Zig x0={355} x1={390} y={268} c="#00e5ff" />
    <Zig x0={600} x1={645} y={237} c="#00e5ff" />
    {/* scribble */}
    <path d="M205 95L215 88L230 87M222 87L212 117M232 92L228 113L236 100L244 96M250 88L246 112L256 96L262 88M270 84L262 116L274 85L282 110M292 82L284 118M296 108L302 96M308 95L316 90L332 88M322 90L314 118M330 92L322 110" stroke="#e81c1c" fill="none" />
    {/* arrows */}
    <BuyMark x={201} y={270} />
    <UpArrow x={212} y={287} c="#000" />
    <BuyMark x={800} y={288} />
    <BuyMark x={894} y={342} />
    <UpArrow x={928} y={380} c="#000" />
    <UpArrow x={337} y={326} />
    <UpArrow x={593} y={275} />
    <DownArrow x={161} y={78} />
    <DownArrow x={485} y={115} />
    <DownArrow x={677} y={150} />
    <DownArrow x={479} y={130} c="#000" />
    <DownArrow x={490} y={130} c="#000" />
    <XMark x={485} y={126} c="#ff0000" />
    <XMark x={553} y={129} c="#ff0000" />
    <XMark x={677} y={160} c="#ff0000" />
    <XMark x={161} y={84} c="#ff0000" />
    <XMark x={25} y={185} c="#6060e0" />
    <XMark x={101} y={195} c="#6060e0" />
    <XMark x={337} y={311} c="#6060e0" />
    <XMark x={593} y={265} c="#6060e0" />
    {/* text on main */}
    <path d="M9 80h7l-3.5 4z" fill={SLATE} />
    <AxisText x={20} y={85}>Ger30,Daily</AxisText>
    <AxisText x={77} y={85}>10725.92 10885.39 10683.91 10794.51</AxisText>
    <AxisText x={9} y={99}>-1</AxisText>
    <AxisText x={27} y={99}>-1</AxisText>
    <SignalText x={11} y={111}>ForexCounterAttack (C) Signal</SignalText>
    <BigPrice x={1041} y={137}>10794.51</BigPrice>
    <PatternText x={1168} y={140}>Bullish Gartley</PatternText>
    {fibR.map(([t, y]) => (
      <FibText key={t} x={1314} y={y + 3} textAnchor="end" $c={BR}>{t}</FibText>
    ))}
    {fibL.map(([t, y, x]) => (
      <FibText key={t} x={x} y={y + 3} $c={TE}>{t}</FibText>
    ))}
    <PriceBox x={103} y={86} w={49} h={12} t="13597.65" c="#0000ff" />
    <PriceBox x={427} y={129} w={49} h={13} t="13202.55" c="#0000ff" />
    <PriceBox x={279} y={292} w={49} h={13} t="11702.84" c="#ff0000" />
    <PriceBox x={1072} y={388} w={47} h={13} t="10819.96" c="#0000ff" />
    <PriceBox x={1072} y={416} w={47} h={13} t="10564.57" c="#ff0000" />

    {/* grid through the indicator panels */}
    <g shapeRendering="crispEdges">
      {gridXs.map((x) => (
        <path key={x} d={`M${x + 0.5} 430V662`} stroke={SLATE} strokeDasharray="4 3" />
      ))}
    </g>

    {/* panel 1 */}
    <g shapeRendering="crispEdges">
      <Hist segs={hist1} base={478} w={4} />
      <path d="M138 494.5H1062" stroke="#000" />
      <PL p={limeThick} c="#00e600" w={2.5} />
      <PL p={redThin} c="#ff0000" />
      <PL p={limeThin} c="#8fe800" />
      {row526.map(([a, b, c], i) => <rect key={i} x={a} y={525} width={Math.max(1, b - a)} height={2} fill={c} />)}
      {row532.map(([a, b, c], i) => <rect key={i} x={a} y={531} width={Math.max(1, b - a)} height={2} fill={c} />)}
      <PL p={[[197,536],[347,508]]} c="#fff" w={4} />
      <PL p={[[897,525],[1062,513]]} c="#fff" w={4} />
    </g>
    <AxisText x={138} y={462} $s={9.2}>5 TREND - 2 0.0000 -368.5745 0.0000 0.0000  ForexCounterAttack Filter 0.0100  ForexCounterAttack Filter 0.0000  D1 Didi_index 0.9852 1.0000 1.0173</AxisText>

    {/* panel 2 */}
    <g shapeRendering="crispEdges">
      <Hist segs={hist2} base={575} />
      <path d="M138 569.5H1058M138 582.5H1058" stroke={SLATE} strokeDasharray="4 3" />
      <path d="M138 600.5H1058" stroke="#cc1111" />
      <path d="M138 550.5H1058" stroke="#008000" />
      <PL p={[[138,546],[450,546],[455,551],[460,546],[470,546],[479,554],[484,547],[620,546],[628,549],[634,546],[1062,546]]} c="#ff0000" w={2.5} />
      <PL p={[[459,546],[460,620],[462,620],[463,546]]} c="#ff0000" w={2} />
      <path d="M138 575.5H1318" stroke="#ffff4a" />
    </g>
    <AxisText x={138} y={554}>_CFGB</AxisText>

    {/* panel 3 */}
    <g shapeRendering="crispEdges">
      <Squares segs={sq1} y={630} />
      <Squares segs={sq2} y={637} />
    </g>
    {/* panel 4 */}
    <AxisText x={8} y={654} $c="#7c8a8a">hpp 0.0000  hpp 0.0000</AxisText>
    <g shapeRendering="crispEdges">
      <path d="M5 651H120" stroke="#000" strokeWidth="5" />
      <PL p={signal} c="#000" w={5} />
      <path d="M5 651H120" stroke="#fff" strokeWidth="1.3" />
      <PL p={signal} c="#fff" w={1.3} />
    </g>

    {/* frames and axes */}
    <g shapeRendering="crispEdges">
      {boxes.map(([a, b]) => (
        <rect key={a} x={4.5} y={a} width={1312} height={b - a} fill="none" stroke={SLATE} />
      ))}
      {axisPrices.map(([, y]) => <path key={y} d={`M1317 ${y}h4`} stroke={SLATE} />)}
      {dates.map(([, x]) => <path key={x} d={`M${x + 0.5} 662v4`} stroke={SLATE} />)}
      <rect x={1318} y={392} width={46} height={11} fill={SLATE} />
      <rect x={1318} y={570} width={7} height={11} fill="#ffff00" />
      <path d="M1320 537.5H1363M1320 623.5H1363" stroke={SLATE} strokeWidth="2" strokeDasharray="1 1" />
    </g>
    {axisPrices.map(([t, y]) => <AxisText key={t} x={1323} y={y + 3.5}>{t}</AxisText>)}
    <AxisText x={1323} y={401} $c="#ffffff">10794.51</AxisText>
    <AxisText x={1319} y={579} $c="#7a7a00">0</AxisText>
    <AxisText x={1321} y={460}>1.5755</AxisText>
    <AxisText x={1321} y={536}>1.4718</AxisText>
    <AxisText x={1321} y={552.5}>1.5766</AxisText>
    <AxisText x={1321} y={624}>1.4485</AxisText>
    <AxisText x={1320} y={635}>0.00</AxisText>
    <AxisText x={1320} y={639}>1.5</AxisText>
    <AxisText x={1320} y={652}>100</AxisText>
    <AxisText x={1320} y={656}>0.00</AxisText>
    <AxisText x={1320} y={660}>-100</AxisText>
    {dates.map(([t, x]) => <AxisText key={t} x={x} y={675}>{t}</AxisText>)}
  </ChartSvg>
);

const Chevron = ({ up }: { up?: boolean }) => (
  <svg width="10" height="7" viewBox="0 0 10 7"><path d={up ? "M1 6l4-4 4 4" : "M1 1l4 4 4-4"} fill="none" stroke="#444" strokeWidth="1.6" /></svg>
);
const ChevronPale = ({ up }: { up?: boolean }) => (
  <svg width="10" height="7" viewBox="0 0 10 7"><path d={up ? "M1 6l4-4 4 4" : "M1 1l4 4 4-4"} fill="none" stroke="#bdbdbd" strokeWidth="1.6" /></svg>
);

const tabs: [string, number, boolean?][] = [
  ["UsaInd,Daily",88],["Usa500,Daily",88],["UsaTec,Daily",88],["Ger30,Daily",80,true],["USDJPY,Daily",93],["AUDJPY,H4",84],
  ["EURJPY,Weekly",109],["AUDUSD,Daily",95],["EURGBP,Weekly",103],["GBPUSD,Weekly",108],["EURAUD,Weekly",108],["USDCNH,Daily",101],
  ["GOLD,Daily",84],["SILVER,Weekly",90],
];

export default function App() {
  return (
    <Page>
      <Global />
      <TitleBar>
        <AppBadge>
          <svg width="14" height="14" viewBox="0 0 14 14"><path d="M2 7l3.5 4.5L12 1.5" fill="none" stroke="#12304f" strokeWidth="2.4" /></svg>
        </AppBadge>
        <TitleText>1781627: Activtrades-Demo - Conto dimostrativo (demo) - [Ger30,Daily]</TitleText>
        <WinBtn><svg width="11" height="2" viewBox="0 0 11 2"><path d="M0 1h11" stroke="#fff" /></svg></WinBtn>
        <WinBtn><svg width="11" height="11" viewBox="0 0 11 11"><path d="M.5 2.5h8v8h-8zM2.5 2.5v-2h8v8h-2" fill="none" stroke="#fff" /></svg></WinBtn>
        <WinBtn><svg width="11" height="11" viewBox="0 0 11 11"><path d="M.5.5l10 10M10.5.5l-10 10" stroke="#fff" /></svg></WinBtn>
      </TitleBar>
      <MenuBar>
        <MenuIcon>
          <svg width="15" height="15" viewBox="0 0 15 15"><rect x="2.5" y="2.5" width="12" height="12" fill="#eaf1fa" stroke="#7f9fc2" /><rect x=".5" y=".5" width="8" height="6" fill="#cfe0f2" stroke="#7f9fc2" /><path d="M4 11l2-3 2 2 2-4 2 3" fill="none" stroke="#2f6fb0" /></svg>
        </MenuIcon>
        <MenuItem $w={36}>File</MenuItem>
        <MenuItem $w={68}>Visualizza</MenuItem>
        <MenuItem $w={60}>Inserisci</MenuItem>
        <MenuItem $w={52}>Grafici</MenuItem>
        <MenuItem $w={70}>Strumenti</MenuItem>
        <MenuItem $w={59}>Finestra</MenuItem>
        <MenuItem $w={40}>Aiuto</MenuItem>
        <MdiGroup>
          <MdiBtn><svg width="9" height="9" viewBox="0 0 9 9"><path d="M1 7.5h6" stroke="#555" strokeWidth="2" /></svg></MdiBtn>
          <MdiBtn><svg width="10" height="10" viewBox="0 0 10 10"><path d="M.5 3.5h6v5h-6zM3 3V1h6v5H7" fill="none" stroke="#555" strokeWidth="1.2" /></svg></MdiBtn>
          <MdiBtn><svg width="9" height="9" viewBox="0 0 9 9"><path d="M1 1l7 7M8 1L1 8" stroke="#555" strokeWidth="2" /></svg></MdiBtn>
        </MdiGroup>
      </MenuBar>
      <Toolbar>
        <Grip />
        <Slot $w={24}><NewChart /></Slot>
        <Slot $w={7}><DropArrow /></Slot>
        <Gap $w={5} />
        <Slot $w={25}><Profiles /></Slot>
        <Slot $w={7}><DropArrow /></Slot>
        <Gap $w={7} /><Sep /><Gap $w={3} />
        <Slot $w={24}><MarketWatch /></Slot>
        <Gap $w={6} />
        <Slot $w={24}><FolderStar /></Slot>
        <Gap $w={4} />
        <Slot $w={24}><Navigator /></Slot>
        <Gap $w={5} /><Sep /><Gap $w={7} />
        <Slot $w={22}><NewOrder /></Slot>
        <OrderLabel>Nuovo ordine</OrderLabel>
        <Gap $w={4} />
        <Slot $w={24}><Expert /></Slot>
        <Gap $w={2} /><Sep $strong /><Gap $w={1} />
        <Grip />
        <Gap $w={5} />
        <Slot $w={24}><ChartBar /></Slot>
        <Gap $w={1} />
        <Slot $w={25} $active><ChartCandle /></Slot>
        <Gap $w={4} />
        <Slot $w={24}><ChartLine /></Slot>
        <Gap $w={4} /><Sep /><Gap $w={5} />
        <Slot $w={24}><ZoomIcon /></Slot>
        <Gap $w={3} />
        <Slot $w={24}><ZoomIcon minus /></Slot>
        <Gap $w={6} /><Sep /><Gap $w={6} />
        <Slot $w={24}><AutoScroll /></Slot>
        <Gap $w={3} />
        <Slot $w={25} $active><ChartShift /></Slot>
        <Gap $w={4} /><Sep /><Gap $w={6} />
        <Slot $w={23}><Indicators /></Slot>
        <Slot $w={7}><DropArrow /></Slot>
        <Gap $w={5} />
        <Slot $w={25}><Templates /></Slot>
        <Slot $w={7}><DropArrow /></Slot>
        <Gap $w={4} /><Sep $strong /><Gap $w={1} />
        <Grip />
        <Gap $w={2} />
        <Slot $w={25} $active><Cursor /></Slot>
        <Gap $w={3} />
        <Slot $w={25}><Cross /></Slot>
        <Gap $w={4} /><Sep /><Gap $w={5} />
        <Slot $w={24}><VLine /></Slot>
        <Gap $w={5} />
        <Slot $w={24}><HLine /></Slot>
        <Gap $w={4} />
        <Slot $w={24}><TLine /></Slot>
        <Gap $w={4} />
        <Slot $w={24}><ChanE /></Slot>
        <Gap $w={5} />
        <Slot $w={24}><FiboH /></Slot>
        <Gap $w={6} />
        <Slot $w={24}><LetterA /></Slot>
        <Gap $w={1} />
        <Slot $w={24}><TextBox /></Slot>
        <Gap $w={4} />
        <Slot $w={24}><Equi /></Slot>
        <Gap $w={4} />
        <Slot $w={24}><RectIcon /></Slot>
        <Gap $w={4} /><Sep /><Gap $w={6} />
        <Slot $w={24}><FiboFan /></Slot>
        <Gap $w={5} />
        <Slot $w={24}><ChanF /></Slot>
        <Gap $w={3} />
        <Slot $w={24}><GridF /></Slot>
        <Gap $w={5} />
        <Slot $w={24}><ArrowsIcon /></Slot>
        <Slot $w={6}><DropArrow /></Slot>
        <Gap $w={4} /><Sep $strong /><Gap $w={1} />
        <Grip />
        <Period $w={26}>M5</Period>
        <Gap $w={1} />
        <Period $w={28}>M15</Period>
        <Period $w={28}>M30</Period>
        <Period $w={26}>H1</Period>
        <Gap $w={3} />
        <Period $w={26}>H4</Period>
        <Gap $w={3} />
        <Period $w={25} $active>D1</Period>
        <Gap $w={3} />
        <Period $w={26}>W1</Period>
        <Gap $w={1} />
        <Period $w={26}>MN</Period>
        <Gap $w={4} />
        <Slot $w={24}><Search /></Slot>
        <Gap $w={7} />
        <Slot $w={24}><Chat /></Slot>
      </Toolbar>
      <ChartArea>
        <Chart />
        <Dialog>
          <DialogHead>
            <HelpMark>?</HelpMark>
            <svg width="11" height="11" viewBox="0 0 11 11"><path d="M.5.5l10 10M10.5.5l-10 10" stroke="#8a8a8a" /></svg>
          </DialogHead>
          <DialogBody>
            <BodyText>ng buy</BodyText>
            <BodyScroll>
              <ChevronPale up />
              <ChevronPale />
            </BodyScroll>
          </DialogBody>
          <ListBox>
            <ListRows>
              <ListRow $x={0}>: strong buy</ListRow>
              <ListRow $white $x={2}>trend direction &amp; fo…</ListRow>
              <ListRow $x={-3}>5 Didi_index trend c…</ListRow>
              <ListRow $white $x={-3}>5 crossed 0.05 line up</ListRow>
            </ListRows>
            <ListScroll>
              <ScrollThumb />
              <Chevron up />
              <Chevron />
            </ListScroll>
          </ListBox>
        </Dialog>
      </ChartArea>
      <TabBar>
        {tabs.map(([t, w, a], i) => (
          <Tab key={t} $w={w} $active={a} $last={a || i === tabs.length - 1 || tabs[i + 1]?.[2]}>{t}</Tab>
        ))}
        <TabArrows>
          <svg width="5" height="9" viewBox="0 0 5 9"><path d="M5 0v9L0 4.5z" fill="#8a8a8a" /></svg>
          <svg width="5" height="9" viewBox="0 0 5 9"><path d="M0 0v9l5-4.5z" fill="#000" /></svg>
        </TabArrows>
      </TabBar>
      <StatusBar>
        <StatusCell $w={675}>Per aiuto, premi F1</StatusCell>
        <StatusCell $w={358}>Default</StatusCell>
        <StatusCell $w={67} $line />
        <StatusCell $w={70} $line />
        <StatusCell $w={66} $line />
        <StatusCell $w={130} $line>
          <svg width="23" height="14" viewBox="0 0 23 14">
            {Array.from({ length: 8 }, (_, i) => (
              <g key={i}>
                <rect x={i * 3} y={7 - i} width={2} height={i + 1} fill="#808000" />
                <rect x={i * 3} y={8} width={2} height={6} fill="#1e4e79" />
              </g>
            ))}
          </svg>
          939/3 kb
        </StatusCell>
      </StatusBar>
    </Page>
  );
}
